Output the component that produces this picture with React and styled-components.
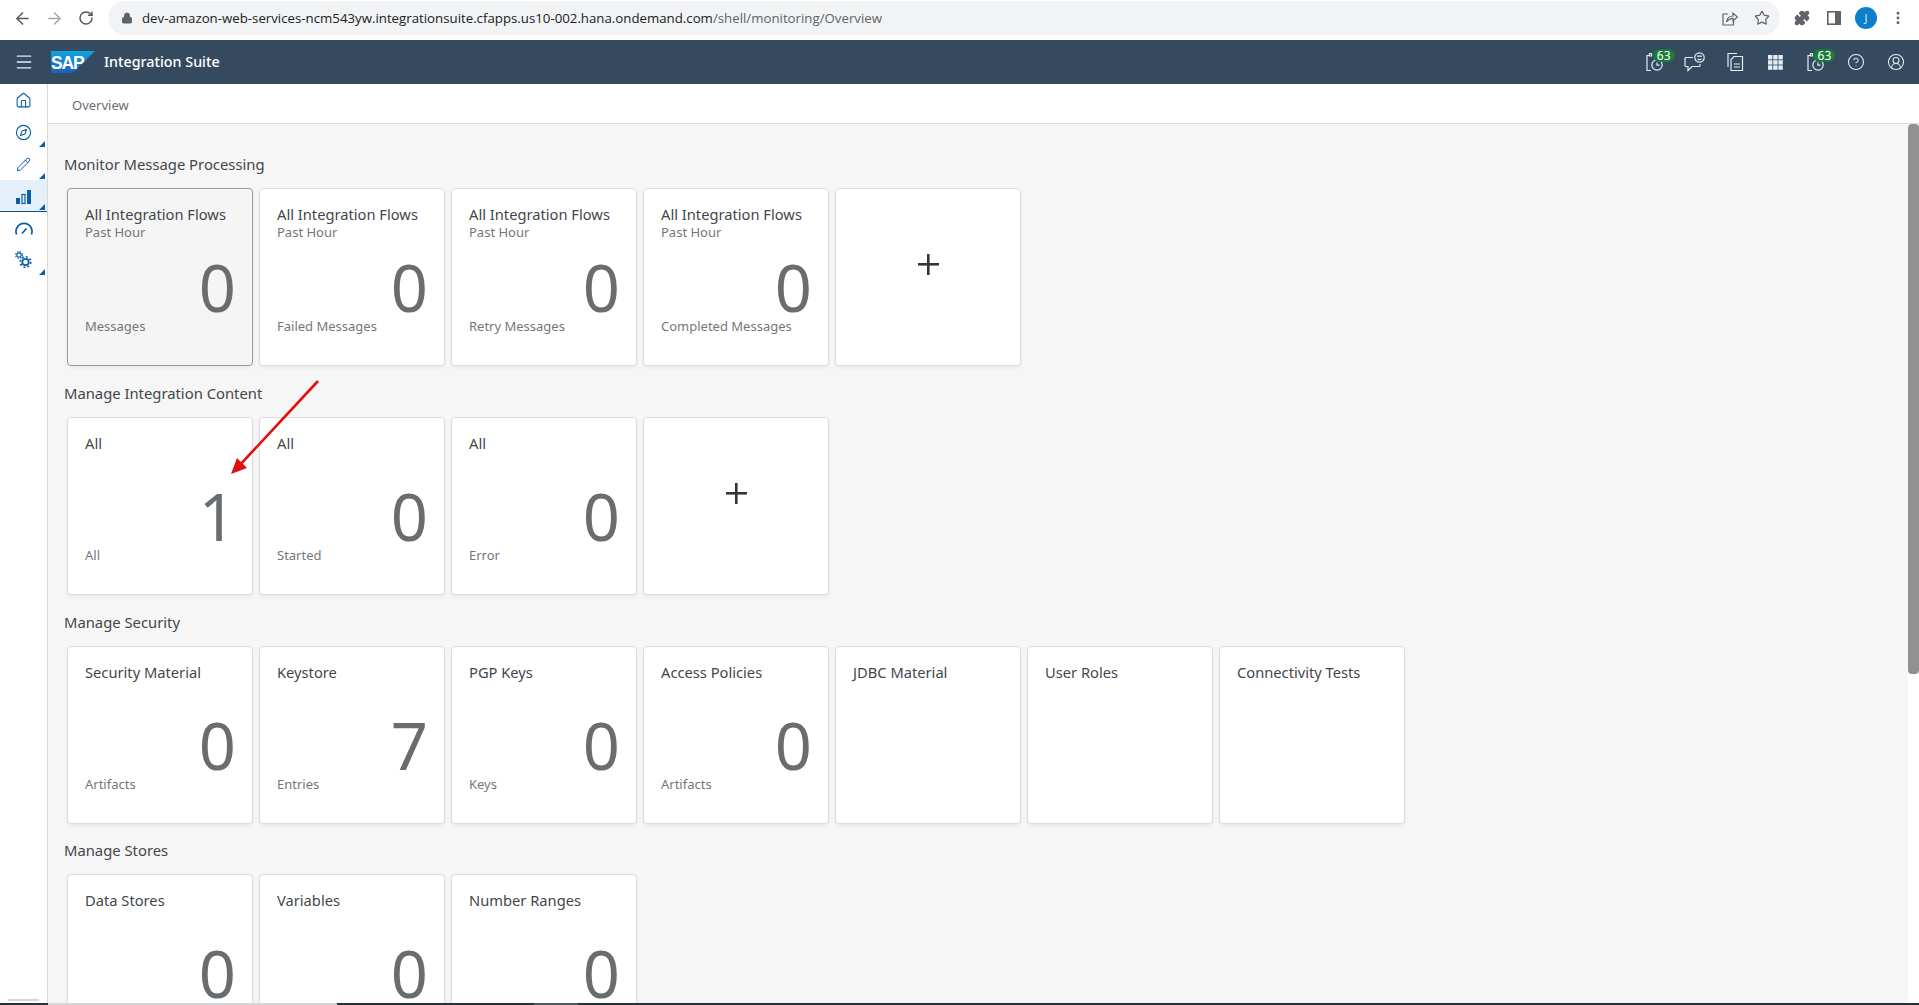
import React from "react";
import styled, { createGlobalStyle } from "styled-components";
import { ArrowLeft, ArrowRight, RotateCw, Lock, Star, Puzzle, Menu, House, Compass, Pencil, CircleHelp, CircleUserRound, EllipsisVertical } from "lucide-react";

const sections = [
  {
    title: "Monitor Message Processing",
    cards: [
      { title: "All Integration Flows", sub: "Past Hour", value: "0", label: "Messages", selected: true },
      { title: "All Integration Flows", sub: "Past Hour", value: "0", label: "Failed Messages" },
      { title: "All Integration Flows", sub: "Past Hour", value: "0", label: "Retry Messages" },
      { title: "All Integration Flows", sub: "Past Hour", value: "0", label: "Completed Messages" },
      { add: true },
    ],
  },
  {
    title: "Manage Integration Content",
    cards: [
      { title: "All", value: "1", label: "All" },
      { title: "All", value: "0", label: "Started" },
      { title: "All", value: "0", label: "Error" },
      { add: true },
    ],
  },
  {
    title: "Manage Security",
    cards: [
      { title: "Security Material", value: "0", label: "Artifacts" },
      { title: "Keystore", value: "7", label: "Entries" },
      { title: "PGP Keys", value: "0", label: "Keys" },
      { title: "Access Policies", value: "0", label: "Artifacts" },
      { title: "JDBC Material" },
      { title: "User Roles" },
      { title: "Connectivity Tests" },
    ],
  },
  {
    title: "Manage Stores",
    cards: [
      { title: "Data Stores", value: "0" },
      { title: "Variables", value: "0" },
      { title: "Number Ranges", value: "0" },
    ],
  },
];

const ChartIcon = () => (
  <svg width="17" height="16" viewBox="0 0 17 16" fill="none">
    <rect x="1" y="9" width="4" height="6" fill="#0a5ea8" />
    <rect x="7" y="5.5" width="3" height="9" stroke="#0a5ea8" strokeWidth="1.2" />
    <rect x="12" y="1" width="4" height="14" fill="#0a5ea8" />
  </svg>
);

const GaugeIcon = () => (
  <svg width="18" height="14" viewBox="0 0 18 14" fill="none" stroke="#0a5ea8" strokeWidth="1.7">
    <path d="M1.6 13.5 A8 8 0 1 1 16.4 13.5" />
    <path d="M7 12.5 L11.5 7.5" />
  </svg>
);

const GearsIcon = () => (
  <svg width="17" height="18" viewBox="0 0 17 18" fill="none" stroke="#0a5ea8">
    <circle cx="4" cy="4" r="2.2" strokeWidth="1.2" />
    <circle cx="4" cy="4" r="3.4" strokeWidth="1.1" strokeDasharray="1.4 1.3" />
    <circle cx="10.5" cy="11" r="3.2" strokeWidth="1.8" />
    <circle cx="10.5" cy="11" r="5.3" strokeWidth="1.6" strokeDasharray="2 2.1" />
  </svg>
);

const ClipboardClockIcon = () => (
  <svg width="18" height="20" viewBox="0 0 18 20" fill="none" stroke="#e3edf6" strokeWidth="1.2">
    <path d="M5 18.5 H1 V3.5 H3.5 M3.5 1.5 H5.5 V4 H3.5 Z" />
    <circle cx="11" cy="13" r="5.2" />
    <path d="M11 10.5 V13.2 H13.5" />
  </svg>
);

const ChatIcon = () => (
  <svg width="22" height="20" viewBox="0 0 22 20" fill="none" stroke="#e3edf6" strokeWidth="1.2">
    <path d="M9 5.5 H2 A1 1 0 0 0 1 6.5 V13.5 A1 1 0 0 0 2 14.5 H4 V18.5 L8 14.5 H15 A1 1 0 0 0 16 13.5 V12" />
    <circle cx="15.5" cy="5.5" r="4.7" />
    <path d="M13 4.2 H18 M13.5 7 Q15.5 8.4 17.5 7" />
  </svg>
);

const DocsIcon = () => (
  <svg width="18" height="20" viewBox="0 0 18 20" fill="none" stroke="#e3edf6" strokeWidth="1.2">
    <path d="M2 15 V1.5 H11" />
    <path d="M8 4.5 H16.5 V18.5 H5 V7.5 Z" />
    <path d="M8 12 H14 M8 15 H14" />
  </svg>
);

const GridIcon = () => (
  <svg width="15" height="15" viewBox="0 0 15 15" fill="#e3edf6">
    {[0, 5.2, 10.4].flatMap((y) =>
      [0, 5.2, 10.4].map((x) => <rect key={`${x}-${y}`} x={x} y={y} width="4.4" height="4.4" />)
    )}
  </svg>
);

const ShareIcon = () => (
  <svg width="16" height="15" viewBox="0 0 16 15" fill="none" stroke="#5f6368" strokeWidth="1.2">
    <path d="M6 3 H1 V14 H11.5 V10" />
    <path d="M4.5 11 C5 7 7.5 5 11 5 V2 L15.5 6 L11 10 V7.3 C8.5 7.3 6.2 8.5 4.5 11 Z" />
  </svg>
);

const SapLogo = () => (
  <svg width="44" height="22" viewBox="0 0 44 22">
    <defs>
      <linearGradient id="sapBlue" x1="0" y1="0" x2="0" y2="1">
        <stop offset="0" stopColor="#0ea5e4" />
        <stop offset="1" stopColor="#1b5fb6" />
      </linearGradient>
    </defs>
    <polygon points="0,0 44,0 22,22 0,22" fill="url(#sapBlue)" />
    <text x="0" y="17.5" fontFamily="Liberation Sans, sans-serif" fontSize="17.5" fontWeight="700" letterSpacing="-1.2" fill="#fff">
      SAP
    </text>
  </svg>
);

const PanelIcon = () => (
  <svg width="14" height="14" viewBox="0 0 14 14">
    <rect x="0.8" y="0.8" width="12.4" height="12.4" fill="none" stroke="#5f6368" strokeWidth="1.6" />
    <rect x="8" y="1" width="5" height="12" fill="#5f6368" />
  </svg>
);

const App = () => (
  <Page>
    <GlobalStyle />
    <BrowserBar>
      <NavButton><ArrowLeft size={19} color="#55585c" strokeWidth={2} /></NavButton>
      <NavButton><ArrowRight size={19} color="#a6a8ab" strokeWidth={2} /></NavButton>
      <NavButton><RotateCw size={16} color="#55585c" strokeWidth={2.2} /></NavButton>
      <UrlPill>
        <Lock size={12} color="#5f6368" fill="#5f6368" />
        <UrlText>
          dev-amazon-web-services-ncm543yw.integrationsuite.cfapps.us10-002.hana.ondemand.com
          <UrlPath>/shell/monitoring/Overview</UrlPath>
        </UrlText>
        <UrlActions>
          <ShareIcon />
          <Star size={16} color="#5f6368" strokeWidth={1.8} />
        </UrlActions>
      </UrlPill>
      <BrowserTools>
        <ToolSlot><Puzzle size={16} color="#5f6368" fill="#5f6368" /></ToolSlot>
        <ToolSlot><PanelIcon /></ToolSlot>
        <ToolSlot><Avatar>J</Avatar></ToolSlot>
        <ToolSlot><EllipsisVertical size={16} color="#5f6368" strokeWidth={2.4} /></ToolSlot>
      </BrowserTools>
    </BrowserBar>

    <ShellBar>
      <MenuButton><Menu size={20} color="#e3edf6" strokeWidth={1.6} /></MenuButton>
      <SapLogo />
      <ProductName>Integration Suite</ProductName>
      <ShellActions>
        <ShellAction><ClipboardClockIcon /><Badge>63</Badge></ShellAction>
        <ShellAction><ChatIcon /></ShellAction>
        <ShellAction><DocsIcon /></ShellAction>
        <ShellAction><GridIcon /></ShellAction>
        <ShellAction><ClipboardClockIcon /><Badge>63</Badge></ShellAction>
        <ShellAction><CircleHelp size={18} color="#e3edf6" strokeWidth={1.4} /></ShellAction>
        <ShellAction><CircleUserRound size={18} color="#e3edf6" strokeWidth={1.4} /></ShellAction>
      </ShellActions>
    </ShellBar>

    <Body>
      <SideNav>
        <NavItem><House size={17} color="#0a5ea8" strokeWidth={1.5} /></NavItem>
        <NavItem $more><Compass size={17} color="#0a5ea8" strokeWidth={1.6} /></NavItem>
        <NavItem $more><Pencil size={15} color="#0a5ea8" strokeWidth={1.6} /></NavItem>
        <NavItem $more $active><ChartIcon /></NavItem>
        <NavItem><GaugeIcon /></NavItem>
        <NavItem $more><GearsIcon /></NavItem>
        <NavGrip />
      </SideNav>
      <Main>
        <SubHeader>Overview</SubHeader>
        <ContentRow>
          <Content>
            {sections.map((section) => (
              <Section key={section.title}>
                <SectionTitle>{section.title}</SectionTitle>
                <CardRow>
                  {section.cards.map((card, index) =>
                    card.add ? (
                      <AddCard key={index}>
                        <PlusMark />
                      </AddCard>
                    ) : (
                      <Card key={index} $selected={card.selected}>
                        <CardTitle>{card.title}</CardTitle>
                        {card.sub && <CardSub>{card.sub}</CardSub>}
                        {card.value && <CardValue>{card.value}</CardValue>}
                        {card.value && <CardLabel>{card.label}</CardLabel>}
                      </Card>
                    )
                  )}
                </CardRow>
              </Section>
            ))}
          </Content>
          <ScrollTrack>
            <ScrollThumb />
          </ScrollTrack>
        </ContentRow>
      </Main>
    </Body>
    <Taskbar>
      <TaskSegment $w="48px" $c="#24333a" />
      <TaskSegment $w="289px" $c="#d4d6d7" />
      <TaskSegment $w="197px" $c="#24333a" />
      <TaskSegment $w="44px" $c="#4d5a60" />
      <TaskSegment $w="auto" $c="#24333a" />
    </Taskbar>
    <Annotation width="100" height="105" viewBox="0 0 100 105">
      <line x1="93" y1="7" x2="13" y2="93" stroke="#e01010" strokeWidth="2.6" />
      <polygon points="6,100 12,84 22,94" fill="#e01010" />
    </Annotation>
  </Page>
);

export default App;

const GlobalStyle = createGlobalStyle`
  html, body {
    margin: 0;
    height: 100%;
    overflow: hidden;
    background: #fff;
  }
  body {
    font-family: "Noto Sans", "Open Sans", Arial, sans-serif;
  }
`;

const Page = styled.div`
  position: relative;
  width: 1919px;
  height: 1005px;
  display: flex;
  flex-direction: column;
  overflow: hidden;
`;

const BrowserBar = styled.div`
  flex: 0 0 40px;
  height: 40px;
  box-sizing: border-box;
  display: flex;
  align-items: center;
  padding: 0 0 4px 6px;
  background: #fff;
`;

const NavButton = styled.div`
  width: 32px;
  display: flex;
  justify-content: center;
`;

const UrlPill = styled.div`
  margin-left: 6px;
  width: 1672px;
  height: 34px;
  box-sizing: border-box;
  display: flex;
  align-items: center;
  padding: 0 10px 0 13px;
  border-radius: 17px;
  background: #f1f3f4;
`;

const UrlText = styled.div`
  margin-left: 9px;
  flex: 1;
  font-family: "Open Sans", sans-serif;
  font-size: 13.25px;
  color: #202124;
  white-space: nowrap;
`;

const UrlPath = styled.span`
  color: #5f6368;
`;

const UrlActions = styled.div`
  display: flex;
  align-items: center;
  gap: 16px;
`;

const BrowserTools = styled.div`
  margin-left: 6px;
  display: flex;
  align-items: center;
`;

const ToolSlot = styled.div`
  width: 32px;
  display: flex;
  justify-content: center;
`;

const Avatar = styled.div`
  width: 22px;
  height: 22px;
  border-radius: 50%;
  background: #0b7fc9;
  color: #cfe8f8;
  font-size: 11px;
  line-height: 22px;
  text-align: center;
`;

const ShellBar = styled.div`
  flex: 0 0 44px;
  display: flex;
  align-items: center;
  background: #354a5f;
`;

const MenuButton = styled.div`
  width: 51px;
  display: flex;
  justify-content: center;
  padding-right: 3px;
  box-sizing: border-box;
`;

const ProductName = styled.div`
  margin: -2px 0 0 9px;
  font-size: 14.3px;
  font-weight: 500;
  color: #fff;
`;

const ShellActions = styled.div`
  margin-left: auto;
  margin-right: 3px;
  display: flex;
`;

const ShellAction = styled.div`
  position: relative;
  width: 40.2px;
  height: 44px;
  display: flex;
  align-items: center;
  justify-content: center;
`;

const Badge = styled.div`
  position: absolute;
  top: 9px;
  left: 18px;
  width: 22px;
  height: 13px;
  border-radius: 7px;
  background: #1b7a3a;
  color: #fff;
  font-size: 12px;
  line-height: 13px;
  text-align: center;
`;

const Body = styled.div`
  flex: 1;
  min-height: 0;
  display: flex;
`;

const SideNav = styled.nav`
  position: relative;
  flex: 0 0 47px;
  padding-top: 0;
  background: #fff;
  border-right: 1px solid #d9d9d9;
`;

const NavItem = styled.div`
  position: relative;
  height: 32px;
  box-sizing: border-box;
  display: flex;
  align-items: center;
  justify-content: center;
  padding-top: ${(props) => (props.$active ? "2px" : "0")};
  background: ${(props) => (props.$active ? "#e5f0fa" : "transparent")};
  border-bottom: ${(props) => (props.$active ? "1px solid #0a4f8f" : "none")};
  &::after {
    content: "";
    display: ${(props) => (props.$more ? "block" : "none")};
    position: absolute;
    right: 2px;
    bottom: 1px;
    border-style: solid;
    border-width: 0 0 6px 6px;
    border-color: transparent transparent #0a5ea8 transparent;
  }
`;

const NavGrip = styled.div`
  position: absolute;
  left: 8px;
  bottom: 4px;
  width: 31px;
  height: 2px;
  background: #d4d6d7;
`;

const Main = styled.main`
  flex: 1;
  min-width: 0;
  display: flex;
  flex-direction: column;
`;

const SubHeader = styled.div`
  flex: 0 0 40px;
  box-sizing: border-box;
  padding: 3px 0 0 24px;
  line-height: 36px;
  font-size: 13px;
  color: #6a6d70;
  background: #fff;
  border-bottom: 1px solid #d9d9d9;
`;

const ContentRow = styled.div`
  flex: 1;
  min-height: 0;
  display: flex;
`;

const Content = styled.div`
  flex: 1;
  min-width: 0;
  overflow: hidden;
  padding: 30px 0 0 16px;
  background: #f6f6f6;
`;

const ScrollTrack = styled.div`
  flex: 0 0 11px;
  background: #fff;
`;

const ScrollThumb = styled.div`
  height: 550px;
  border-radius: 4px;
  background: #919191;
`;

const Section = styled.section`
  margin-bottom: 16.75px;
`;

const SectionTitle = styled.h2`
  margin: 0 0 14px;
  font-size: 14.8px;
  font-weight: 400;
  line-height: 20px;
  color: #43474b;
`;

const CardRow = styled.div`
  display: flex;
  gap: 6px;
  padding-left: 3px;
`;

const Card = styled.div`
  width: 186px;
  height: 178px;
  box-sizing: border-box;
  flex: none;
  display: flex;
  flex-direction: column;
  padding: 15px 17px 29px;
  border-radius: 4px;
  border: 1px solid ${(props) => (props.$selected ? "#9a9b9c" : "#dcdcdc")};
  background: ${(props) => (props.$selected ? "#f5f5f5" : "#fff")};
  box-shadow: 0 2px 4px rgba(0, 0, 0, 0.06);
`;

const CardTitle = styled.div`
  font-size: 14.7px;
  line-height: 20px;
  color: #43474b;
  white-space: nowrap;
`;

const CardSub = styled.div`
  font-size: 13px;
  line-height: 16px;
  color: #74777a;
`;

const CardValue = styled.div`
  margin-top: auto;
  margin-right: -1px;
  margin-bottom: -2px;
  font-size: 65px;
  line-height: 62px;
  text-align: right;
  color: #6a6d70;
`;

const CardLabel = styled.div`
  min-height: 20px;
  font-size: 13px;
  line-height: 20px;
  color: #74777a;
`;

const AddCard = styled(Card)`
  align-items: center;
  justify-content: flex-start;
  padding-top: 65px;
`;

const PlusMark = styled.div`
  width: 21px;
  height: 21px;
  background:
    linear-gradient(#32363a, #32363a) center / 21px 2.6px no-repeat,
    linear-gradient(#32363a, #32363a) center / 2.6px 21px no-repeat;
`;

const Taskbar = styled.div`
  position: absolute;
  left: 0;
  right: 0;
  bottom: 0;
  height: 2px;
  display: flex;
`;

const TaskSegment = styled.div`
  flex: ${(props) => (props.$w === "auto" ? "1" : `0 0 ${props.$w}`)};
  background: ${(props) => props.$c};
`;

const Annotation = styled.svg`
  position: absolute;
  left: 225px;
  top: 374px;
`;
